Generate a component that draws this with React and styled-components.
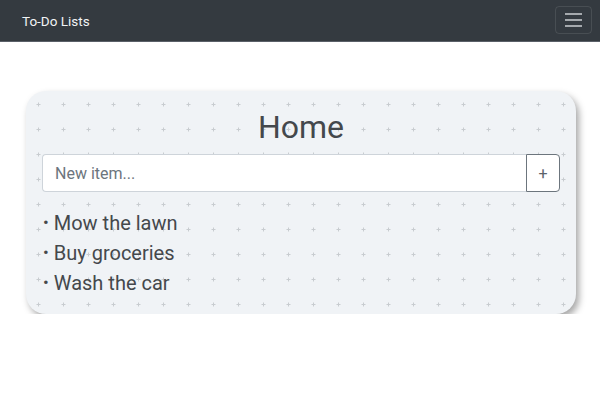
import React from "react";
import styled, { createGlobalStyle } from "styled-components";

const Global = createGlobalStyle`
  html, body { margin: 0; padding: 0; background: #fff; }
  body { font-family: Roboto, "Liberation Sans", sans-serif; }
  * { box-sizing: border-box; }
`;

const Navbar = styled.nav`
  height: 42px;
  background: #343a40;
  border-bottom: 1px solid #5a6068;
  display: flex;
  align-items: center;
  justify-content: space-between;
  padding: 0 8px 0 22px;
`;

const Brand = styled.span`
  color: #f1f3f5;
  font-size: 13.5px;
`;

const Toggler = styled.button`
  width: 37px;
  height: 28px;
  border: 1px solid rgba(255, 255, 255, 0.1);
  border-radius: 4px;
  background: transparent;
  display: flex;
  flex-direction: column;
  align-items: center;
  justify-content: center;
  gap: 4px;
  padding: 0;
  margin-top: -1px;
`;

const Bar = styled.span`
  width: 17px;
  height: 2px;
  background: #a5a9ad;
  display: block;
`;

const Main = styled.main`
  padding: 49px 25px 0 26px;
`;

const Card = styled.section`
  width: 550px;
  border-radius: 20px;
  background-color: #f0f3f6;
  box-shadow: 3px 4px 7px rgba(0, 0, 0, 0.35);
  padding: 16px 16px 16px 16px;
  position: relative;
  overflow: hidden;
`;

const Dots = styled.svg`
  position: absolute;
  inset: 0;
  width: 100%;
  height: 100%;
  pointer-events: none;
`;

const Content = styled.div`
  position: relative;
`;

const Title = styled.h1`
  margin: 0 0 7px;
  text-align: center;
  font-weight: 400;
  font-size: 32px;
  line-height: 40px;
  color: #44484c;
`;

const InputGroup = styled.div`
  display: flex;
  height: 38px;
  margin-bottom: 16px;
`;

const Input = styled.input`
  flex: 1;
  height: 38px;
  border: 1px solid #ced4da;
  border-right: none;
  border-radius: 4px 0 0 4px;
  padding: 0 12px;
  font-family: Roboto, "Liberation Sans", sans-serif;
  font-size: 16px;
  color: #495057;
  background: #fff;
  outline: none;
  &::placeholder { color: #6c757d; }
`;

const AddButton = styled.button`
  width: 34px;
  height: 38px;
  border: 1px solid #6c757d;
  border-radius: 0 4px 4px 0;
  background: #fff;
  color: #5c636a;
  font-family: Roboto, "Liberation Sans", sans-serif;
  font-size: 16px;
  padding: 0;
`;

const List = styled.ul`
  list-style: none;
  margin: 0;
  padding: 0 0 0 1px;
`;

const Item = styled.li`
  font-size: 20px;
  line-height: 30px;
  height: 30px;
  color: #44484c;
  &::before {
    content: "•";
    font-size: 17px;
    line-height: 0;
    margin-right: 5px;
    position: relative;
    top: -2px;
  }
`;

function PlusPattern() {
  const marks = [];
  for (let y = 0; y < 10; y++) {
    for (let x = 0; x < 23; x++) {
      const cx = 12 + x * 25;
      const cy = 13 + y * 25;
      marks.push(
        <path
          key={`${x}-${y}`}
          d={`M${cx - 1.5} ${cy + 0.5}h4M${cx + 0.5} ${cy - 1.5}v4`}
        />
      );
    }
  }
  return (
    <Dots aria-hidden="true">
      <g stroke="#c8ccd0" strokeWidth="1" fill="none">{marks}</g>
    </Dots>
  );
}

export default function App() {
  return (
    <>
      <Global />
      <Navbar>
        <Brand>To-Do Lists</Brand>
        <Toggler aria-label="Toggle navigation">
          <Bar />
          <Bar />
          <Bar />
        </Toggler>
      </Navbar>
      <Main>
        <Card>
          <PlusPattern />
          <Content>
            <Title>Home</Title>
            <InputGroup>
              <Input placeholder="New item..." />
              <AddButton>+</AddButton>
            </InputGroup>
            <List>
              <Item>Mow the lawn</Item>
              <Item>Buy groceries</Item>
              <Item>Wash the car</Item>
            </List>
          </Content>
        </Card>
      </Main>
    </>
  );
}
